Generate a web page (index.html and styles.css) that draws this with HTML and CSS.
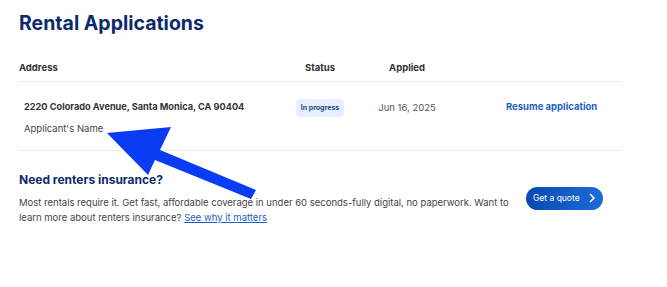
FILE: index.html
```html
<!DOCTYPE html>
<html lang="en">
<head>
  <meta charset="UTF-8">
  <meta name="viewport" content="width=device-width, initial-scale=1.0">
  <title>Rental Applications</title>
  <link rel="stylesheet" href="styles.css">
</head>
<body>
  <main class="page">
    <h1 class="page-title">Rental Applications</h1>

    <div class="apps-table">
      <div class="apps-row apps-head">
        <div class="col-address">Address</div>
        <div class="col-status">Status</div>
        <div class="col-applied">Applied</div>
        <div class="col-action"></div>
      </div>
      <div class="apps-row apps-item">
        <div class="col-address">
          <div class="address">2220 Colorado Avenue, Santa Monica, CA 90404</div>
          <div class="applicant">Applicant's Name</div>
        </div>
        <div class="col-status"><span class="badge">In progress</span></div>
        <div class="col-applied date">Jun 16, 2025</div>
        <div class="col-action"><a class="resume-link" href="#">Resume application</a></div>
      </div>
    </div>

    <section class="insurance">
      <div class="insurance-text">
        <h2 class="insurance-title">Need renters insurance?</h2>
        <p>Most rentals require it. Get fast, affordable coverage in under 60 seconds-fully digital, no paperwork. Want to learn more about renters insurance? <a href="#">See why it matters</a></p>
      </div>
      <a class="quote-btn" href="#">Get a quote
        <svg width="8" height="10" viewBox="0 0 8 10"><path d="M2.5 1.5 L6 5 L2.5 8.5" fill="none" stroke="#fff" stroke-width="1.6" stroke-linecap="round" stroke-linejoin="round"/></svg>
      </a>
    </section>
  </main>

  <!-- annotation arrow drawn over the page -->
  <svg class="annotation" width="667" height="287" viewBox="0 0 667 287">
    <polygon points="107,133 171,127 160,150 256,190 251,199 155,160 148,175" fill="#0a3cf5"/>
  </svg>
</body>
</html>
```

FILE: styles.css
```css
body {
  margin: 0;
  font-family: Inter, "Noto Sans", sans-serif;
  color: #3a3a3a;
  background: #fff;
}
.page {
  padding: 9px 46px 0 19px;
  width: 602px;
}
.page-title {
  margin: 0;
  font-size: 19.5px;
  font-weight: 700;
  color: #0c2a6b;
  line-height: 28px;
}
.apps-table {
  margin-top: 24px;
}
.apps-row {
  display: grid;
  grid-template-columns: 271px 60px 114px 1fr;
  border-bottom: 1px solid #e9e9ec;
}
.apps-head {
  padding-bottom: 6px;
  font-size: 9.5px;
  font-weight: 700;
  line-height: 14px;
  color: #333;
}
.apps-item {
  padding: 16px 0 14px;
  align-items: start;
  font-size: 9.5px;
  line-height: 18px;
}
.col-status,
.col-applied {
  text-align: center;
}
.apps-item .col-address {
  padding-left: 5px;
}
.address {
  font-size: 9.2px;
  font-weight: 700;
  color: #333;
}
.applicant {
  margin-top: 6px;
  color: #444;
  line-height: 14px;
}
.badge {
  display: inline-block;
  margin-top: 1px;
  padding: 0 5px;
  background: #e5f0fc;
  border-radius: 3px;
  font-size: 7px;
  font-weight: 700;
  color: #1d4a8e;
  line-height: 18px;
  vertical-align: top;
}
.date {
  color: #555;
  padding-top: 1px;
}
.col-action {
  padding-left: 42px;
}
.resume-link {
  font-weight: 700;
  color: #1e5fc1;
  text-decoration: none;
}
.insurance {
  display: flex;
  align-items: center;
  gap: 12px;
  padding-top: 20px;
}
.insurance-text {
  width: 495px;
}
.insurance-title {
  margin: 0;
  font-size: 12px;
  font-weight: 700;
  color: #0c2a6b;
  line-height: 18px;
}
.insurance p {
  margin: 6px 0 0;
  font-size: 9.5px;
  line-height: 15px;
  color: #444;
}
.insurance p a {
  color: #1e5fc1;
}
.quote-btn {
  display: inline-flex;
  align-items: center;
  gap: 8px;
  height: 23px;
  padding: 0 7px 0 7px;
  border-radius: 12px;
  background: linear-gradient(90deg, #0a4aae, #1b6cd8);
  color: #fff;
  font-size: 8.5px;
  text-decoration: none;
}
.annotation {
  position: absolute;
  left: 0;
  top: 0;
  pointer-events: none;
}
```
